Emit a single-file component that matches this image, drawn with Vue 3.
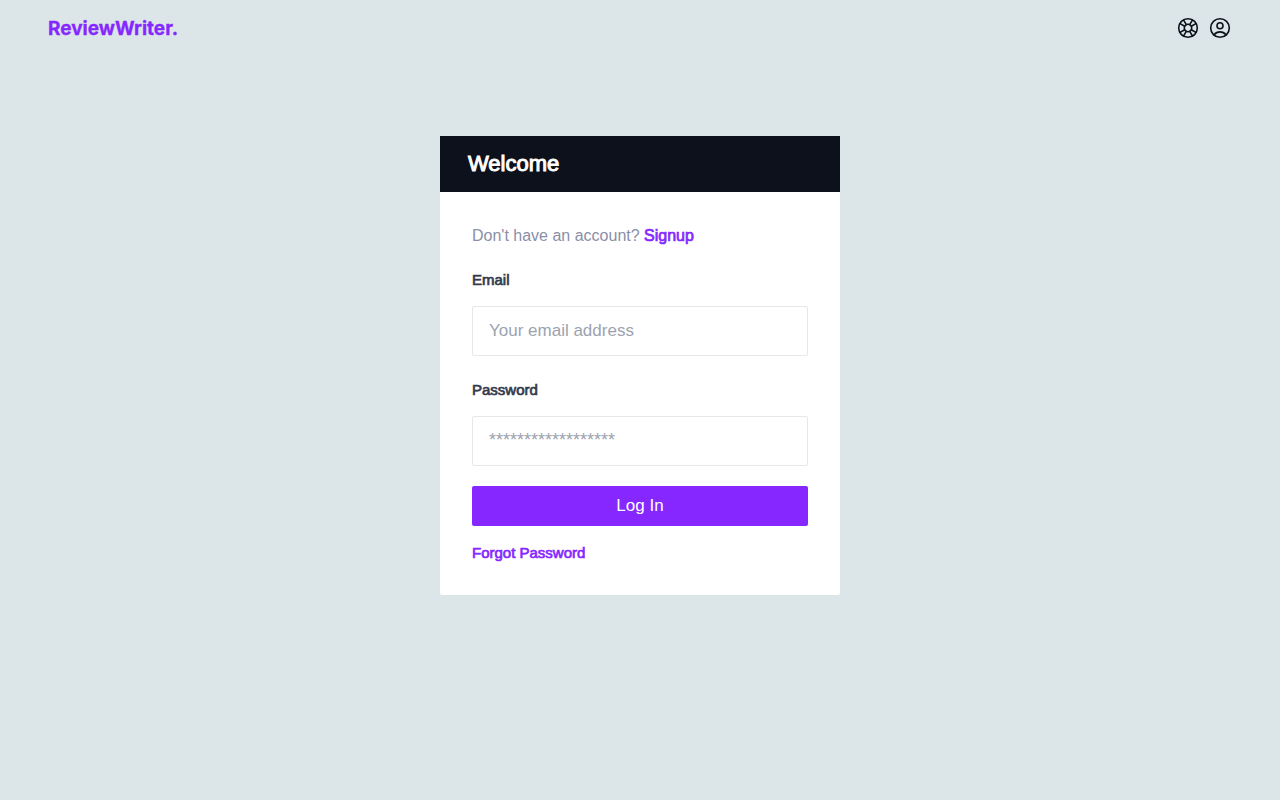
<script setup>
import { ref } from 'vue'

const email = ref('')
const password = ref('')
</script>

<template>
  <div class="page">
    <header class="topbar">
      <a class="brand" href="#">ReviewWriter.</a>
      <nav class="actions">
        <a href="#help" aria-label="Help">
          <svg viewBox="0 0 24 24" width="24" height="24">
            <circle cx="12" cy="12" r="9.3" />
            <circle cx="12" cy="12" r="3.7" />
            <path d="M10.3 8.7 7.6 4.1M8.7 10.3 4.1 7.600M13.700 8.700l2.700-4.600M15.300 10.300l4.600-2.700M10.300 15.300l-2.700 4.600M8.700 13.700l-4.600 2.700M13.700 15.300l2.700 4.600M15.300 13.700l4.600 2.700" />
          </svg>
        </a>
        <a href="#account" aria-label="Account">
          <svg viewBox="0 0 24 24" width="24" height="24">
            <circle cx="12" cy="12" r="9.3" />
            <circle cx="12" cy="9.7" r="3" />
            <path d="M6 18.8c1.5-1.9 3.4-2.9 6-2.9s4.5 1 6 2.9" />
          </svg>
        </a>
      </nav>
    </header>
    <main class="card">
      <h1>Welcome</h1>
      <form @submit.prevent>
        <p>Don't have an account? <a class="strong" href="#signup">Signup</a></p>
        <label for="email">Email</label>
        <input id="email" v-model="email" type="email" placeholder="Your email address" />
        <label for="password">Password</label>
        <input id="password" v-model="password" type="password" placeholder="******************" />
        <button type="submit">Log In</button>
        <a class="forgot" href="#forgot">Forgot Password</a>
      </form>
    </main>
  </div>
</template>

<style>
body {
  background: #dce5e7;
}
</style>

<style scoped>
.page {
  min-height: 100vh;
  font-family: "Liberation Sans", Arial, sans-serif;
  font-size: 16px;
  line-height: 24px;
}
.topbar {
  display: flex;
  align-items: center;
  justify-content: space-between;
  height: 56px;
  padding: 0 48px;
}
a {
  color: #8627ff;
  text-decoration: none;
}
.brand {
  padding-top: 2px;
  font-family: Inter, sans-serif;
  font-size: 19px;
  font-weight: 700;
  -webkit-text-stroke: 0.3px;
}
.actions {
  display: flex;
  gap: 8px;
}
.actions a {
  display: flex;
}
svg {
  fill: none;
  stroke: #0c111b;
  stroke-width: 1.6;
  stroke-linecap: round;
}
.card {
  box-sizing: border-box;
  width: 100%;
  max-width: 400px;
  margin: 80px auto 0;
  background: #fff;
  border-radius: 0 0 2px 2px;
}
h1 {
  margin: 0;
  padding: 12px 28px;
  background: #0c111b;
  color: #fff;
  font-size: 22px;
  line-height: 32px;
  font-weight: 400;
  -webkit-text-stroke: 1px;
}
form {
  display: flex;
  flex-direction: column;
  padding: 32px 32px 30px;
}
p {
  margin: 0 0 20px;
  color: #8a90a6;
}
.strong,
label,
.forgot {
  -webkit-text-stroke: 0.7px;
}
label {
  margin-bottom: 14px;
  color: #323a4e;
  font-size: 15px;
}
input {
  box-sizing: border-box;
  width: 100%;
  height: 50px;
  margin: 0;
  padding: 0 16px;
  border: 1px solid #e5e7eb;
  border-radius: 2px;
  background: #fff;
  color: #323a4e;
  font: inherit;
  font-size: 17px;
}
input + label {
  margin-top: 22px;
}
input::placeholder {
  color: #9ca3af;
}
#password::placeholder {
  font-size: 18px;
}
button {
  height: 40px;
  margin-top: 20px;
  border: 0;
  border-radius: 2px;
  background: #8627ff;
  color: #fff;
  font: inherit;
  font-size: 17px;
}
.forgot {
  align-self: flex-start;
  margin-top: 15px;
  font-size: 15px;
}
</style>
